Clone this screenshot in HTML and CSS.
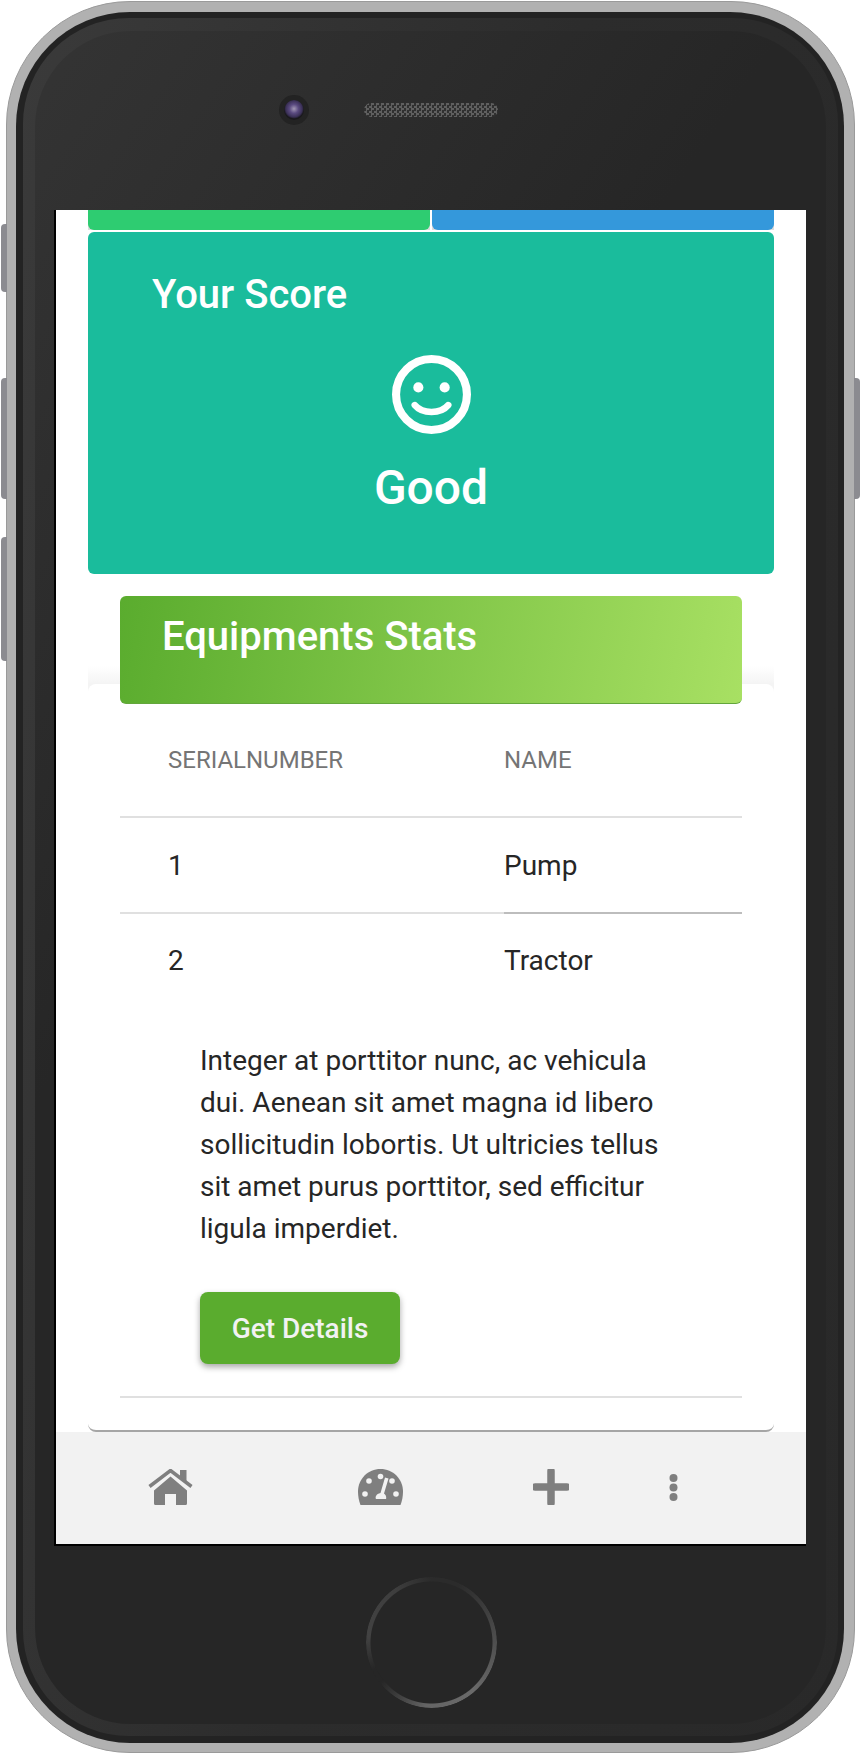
FILE: index.html
```html
<!DOCTYPE html>
<html lang="en">
<head>
<meta charset="utf-8">
<title>Your Score</title>
<link rel="stylesheet" href="styles.css">
</head>
<body>
<div class="phone">
  <span class="side side-mute"></span>
  <span class="side side-up"></span>
  <span class="side side-down"></span>
  <span class="side side-power"></span>
  <div class="bezel">
    <div class="bezel-band">
      <div class="bezel-core">
        <div class="top-bar">
          <span class="camera"><span class="lens"></span></span>
          <span class="speaker"></span>
        </div>
        <div class="screen">
          <main class="scroll">
            <div class="tiles">
              <div class="tile tile-green"></div>
              <div class="tile tile-blue"></div>
            </div>
            <section class="score">
              <h2 class="score-title">Your Score</h2>
              <svg class="smile" viewBox="0 0 78 78" aria-hidden="true">
                <circle cx="39" cy="39" r="35" fill="none" stroke="#fff" stroke-width="8"/>
                <circle cx="26" cy="32" r="5" fill="#fff"/>
                <circle cx="52" cy="32" r="5" fill="#fff"/>
                <path d="M22.500 49.500C30 58.500 48 58.500 55.500 49.500" fill="none" stroke="#fff" stroke-width="6.500" stroke-linecap="round"/>
              </svg>
              <div class="score-value">Good</div>
            </section>
            <div class="stats">
              <div class="stats-head"><h2 class="stats-title">Equipments Stats</h2></div>
              <div class="card-shade">
                <div class="card">
                  <div class="row row-head">
                    <div class="cell cell-a">SERIALNUMBER</div>
                    <div class="cell cell-b">NAME</div>
                  </div>
                  <div class="row row-active">
                    <div class="cell cell-a">1</div>
                    <div class="cell cell-b">Pump</div>
                  </div>
                  <div class="row row-open">
                    <div class="cell cell-a">2</div>
                    <div class="cell cell-b">Tractor</div>
                  </div>
                  <div class="details">
                    <p class="details-text">Integer at porttitor nunc, ac vehicula dui. Aenean sit amet magna id libero sollicitudin lobortis. Ut ultricies tellus sit amet purus porttitor, sed efficitur ligula imperdiet.</p>
                    <button class="details-btn" type="button">Get Details</button>
                  </div>
                </div>
              </div>
            </div>
          </main>
          <nav class="tabbar">
            <svg class="tab-icon tab-home" viewBox="0 0 45 36" aria-hidden="true">
              <path d="M6 21.500L22.500 7.500 39 21.500V34.500a1.500 1.500 0 0 1-1.500 1.500H28V25H17V36H7.500A1.500 1.500 0 0 1 6 34.500Z" fill="#7f7f7f"/>
              <path d="M1.500 17.500L22.500 1.500 43.500 17.500" fill="none" stroke="#7f7f7f" stroke-width="3.500"/>
              <path d="M32 1H38.500V13L32 8Z" fill="#7f7f7f"/>
            </svg>
            <svg class="tab-icon tab-gauge" viewBox="0 0 45 36" aria-hidden="true">
              <path fill-rule="evenodd" fill="#7f7f7f" d="M22.500 0C10 0 0 10 0 22.500C0 27.500 1 32 2.500 36H42.500C44 32 45 27.500 45 22.500C45 10 35 0 22.500 0Z"/>
              <g fill="#f2f2f2">
                <circle cx="22.500" cy="7.500" r="2.800"/>
                <circle cx="11" cy="12" r="2.800"/>
                <circle cx="7" cy="25" r="2.800"/>
                <circle cx="38" cy="25" r="2.800"/>
                <circle cx="34" cy="12" r="2.800"/>
                <path d="M27 8.500L30.500 9.500 26 24.500C28.500 26 28.500 29.500 28 30H18C17 28 18 25 22.500 24Z"/>
              </g>
            </svg>
            <svg class="tab-icon tab-plus" viewBox="0 0 36 36" aria-hidden="true">
              <path d="M18 2V34M2 18H34" fill="none" stroke="#7f7f7f" stroke-width="7.500" stroke-linecap="round"/>
            </svg>
            <svg class="tab-icon tab-more" viewBox="0 0 9 27" aria-hidden="true">
              <circle cx="4.500" cy="4" r="4" fill="#7f7f7f"/>
              <circle cx="4.500" cy="13.500" r="4" fill="#7f7f7f"/>
              <circle cx="4.500" cy="23" r="4" fill="#7f7f7f"/>
            </svg>
          </nav>
        </div>
        <div class="bottom-bar"><span class="home-btn"></span></div>
      </div>
    </div>
  </div>
</div>
</body>
</html>
```
FILE: styles.css
```css
* { box-sizing: border-box; }
html, body { margin: 0; padding: 0; }
body { width: 862px; height: 1754px; background: #fff; font-family: Roboto, "Liberation Sans", sans-serif; overflow: hidden; }

.phone { position: relative; width: 849px; height: 1752px; margin: 1px 0 0 6px; padding: 10px 10px 9px 9px; background: #b1b1b1; border: 1px solid #9a9a9a; border-radius: 124px; }
.side { position: absolute; left: -6px; width: 6px; background: #8b8b90; border-radius: 4px 0 0 4px; }
.side-mute { top: 222px; height: 68px; }
.side-up { top: 376px; height: 121px; }
.side-down { top: 535px; height: 124px; }
.side-power { left: auto; right: -6px; top: 376px; height: 121px; border-radius: 0 4px 4px 0; }

.bezel { height: 100%; padding: 6px 6px 7px 7px; background: #232323; border-radius: 114px; }
.bezel-band { height: 100%; padding: 13px 12px 12px 12px; background: linear-gradient(100deg, #3a3a3a 0, #2c2c2c 50%, #292929 100%); border-radius: 106px; }
.bezel-core { display: flex; flex-direction: column; height: 100%; padding: 0 19px; background: linear-gradient(125deg, #343434 0, #262626 38%); border-radius: 96px; }

.top-bar { flex: none; display: flex; align-items: flex-start; height: 179px; padding: 64px 0 0 225px; }
.camera { flex: none; display: flex; align-items: center; justify-content: center; width: 30px; height: 30px; border-radius: 50%; background: #232323; }
.lens { width: 20px; height: 20px; border-radius: 50%; background: radial-gradient(circle at 50% 44%, #a398b5 0, #5a4a80 30%, #3a3056 55%, #19181c 66%, #19181c 100%); }
.speaker { flex: none; width: 134px; height: 14px; margin: 8px 0 0 55px; border-radius: 7px; background-color: #2a2a2a; background-image: conic-gradient(#5f5f5f 25%, #303030 0 50%, #5f5f5f 0 75%, #303030 0); background-size: 5px 5px; }

.screen { flex: none; display: flex; flex-direction: column; width: 752px; height: 1336px; border-left: 2px solid #000; border-bottom: 2px solid #000; background: #fff; }
.scroll { flex: 1; min-height: 0; overflow: hidden; padding: 0 32px; }

.tiles { display: grid; grid-template-columns: 342px 342px; gap: 2px; height: 20px; }
.tile { background: #dcdcdc; }
.tile::before { content: ""; display: block; height: 100%; border-radius: 0 0 6px 6px; }
.tile-green::before { background: #2ecc71; }
.tile-blue::before { background: #3498db; }

.score { display: flex; flex-direction: column; height: 342px; margin-top: 2px; padding: 41px 64px 0; background: #1abc9c; border-radius: 6px; color: #fff; }
.score-title { margin: 0; font-size: 40px; line-height: 44px; font-weight: 500; }
.smile { display: block; width: 79px; height: 79px; margin: 38px auto 0; align-self: center; }
.score-value { margin-top: 26px; text-align: center; font-size: 48px; line-height: 56px; font-weight: 500; }

.stats { margin-top: 22px; }
.stats-head { position: relative; z-index: 1; height: 108px; margin: 0 32px; padding: 19px 42px 0; border-radius: 6px; border-bottom: 1px solid #63a63c; background: linear-gradient(100deg, #5aac2e 0, #a8e063 100%); }
.stats-title { margin: 0; color: #fff; font-size: 40px; line-height: 44px; font-weight: 500; }
.card-shade { margin-top: -38px; padding-top: 18px; background: linear-gradient(#fff 0, #f4f4f4 18px, #f4f4f4 30px, transparent 30px); }
.card { height: 748px; padding: 20px 32px 0; background: #fff; border-radius: 8px; border-bottom: 2px solid #a6a6a6; }

.row { display: grid; grid-template-columns: 384px 1fr; height: 96px; border-bottom: 2px solid #e0e0e0; color: #262626; font-size: 28px; }
.row-head { height: 114px; color: #757575; font-size: 24px; }
.row-open { border-bottom: 0; height: 94px; padding-bottom: 2px; }
.cell { display: flex; align-items: center; }
.cell-a { padding-left: 48px; }
.row-active .cell-b { margin-bottom: -2px; border-bottom: 2px solid #bdbdbd; }

.details { height: 390px; padding: 0 80px; border-bottom: 2px solid #e0e0e0; }
.details-text { margin: 0; padding-top: 32px; font-size: 28px; line-height: 42px; color: #262626; }
.details-btn { display: block; width: 200px; height: 72px; margin-top: 42px; padding: 0; border: 0; border-radius: 8px; background: #5aac2e; color: #f2f2f2; font: 500 28px Roboto, sans-serif; box-shadow: 0 3px 6px rgba(0, 0, 0, .35); }

.tabbar { flex: none; position: relative; display: flex; align-items: flex-start; height: 112px; padding: 37px 0 0 92px; background: #f2f2f2; }
.tab-icon { flex: none; display: block; height: 36px; }
.tab-home { width: 45px; }
.tab-gauge { width: 45px; margin-left: 165px; }
.tab-plus { width: 36px; margin-left: 130px; }
.tab-more { width: 9px; height: 27px; margin: 5px 0 0 100px; }

.bottom-bar { flex: 1; display: flex; justify-content: center; align-items: flex-start; padding-top: 31px; }
.home-btn { display: block; width: 131px; height: 131px; margin-left: 1px; border-radius: 50%; background: conic-gradient(from 0deg, #2b2b2b 0, #2b2b2b 25deg, #4c4c4c 85deg, #6a6a6a 140deg, #646464 185deg, #3a3a3a 215deg, #262626 232deg, #262626 245deg, #424242 275deg, #3e3e3e 325deg, #2b2b2b 360deg); -webkit-mask: radial-gradient(closest-side, transparent calc(100% - 5px), #000 calc(100% - 4px)); mask: radial-gradient(closest-side, transparent calc(100% - 5px), #000 calc(100% - 4px)); }
```
